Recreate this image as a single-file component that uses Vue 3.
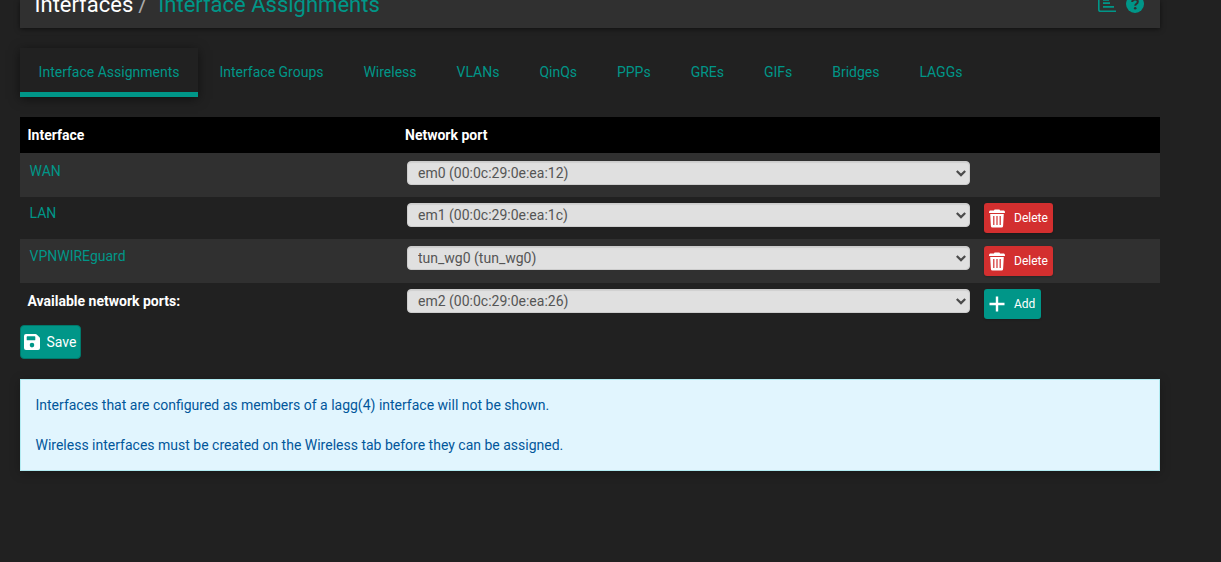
<script setup>
const tabs = ['Interface Assignments', 'Interface Groups', 'Wireless', 'VLANs', 'QinQs', 'PPPs', 'GREs', 'GIFs', 'Bridges', 'LAGGs']
const rows = [
  { name: 'WAN', port: 'em0 (00:0c:29:0e:ea:12)', cls: 'wan' },
  { name: 'LAN', port: 'em1 (00:0c:29:0e:ea:1c)', action: 'Delete', cls: 'lan' },
  { name: 'VPNWIREguard', port: 'tun_wg0 (tun_wg0)', action: 'Delete', cls: 'vpn' },
  { name: 'Available network ports:', port: 'em2 (00:0c:29:0e:ea:26)', action: 'Add', cls: 'available' },
]
</script>

<template>
  <div class="page">
    <header class="header">
      <h1 class="title">
        <span>Interfaces</span><span class="slash">/</span><a class="current">Interface Assignments</a>
      </h1>
      <div class="tools">
        <svg width="18" height="18" viewBox="0 0 18 18" fill="none" stroke="#009688">
          <path d="M.8 0V14.4Q.8 16.2 2.6 16.2H18" stroke-width="1.6" />
          <path d="M5 1.8H13M5 5H11M5 8.2H12M5 11.8H16" stroke-width="1.7" />
        </svg>
        <svg width="18" height="18" viewBox="0 0 18 18">
          <circle cx="9" cy="9" r="9" fill="#009688" />
          <path d="M6.2 7Q6.3 4.4 9 4.4Q11.8 4.4 11.8 6.8Q11.8 8.1 10.4 8.9Q9.2 9.6 9.2 10.7" fill="none" stroke="#303030" stroke-width="2" />
          <circle cx="9.2" cy="13.3" r="1.3" fill="#303030" />
        </svg>
      </div>
    </header>

    <nav class="tabs">
      <a v-for="(t, i) in tabs" :key="t" class="tab" :class="{ active: i === 0 }">{{ t }}</a>
    </nav>

    <div class="table">
      <div class="row head"><div>Interface</div><div>Network port</div><div></div></div>
      <div v-for="r in rows" :key="r.name" class="row" :class="r.cls">
        <div class="name">{{ r.name }}</div>
        <div class="port">
          <div class="field">
            <select><option>{{ r.port }}</option></select>
            <svg class="chevron" width="10" height="7" viewBox="0 0 10 7" fill="none" stroke="#4b4b4b" stroke-width="2.2">
              <path d="M.8 1L5 5.1L9.2 1" />
            </svg>
          </div>
        </div>
        <div class="act">
          <button v-if="r.action" class="btn" :class="r.action.toLowerCase()">
            <svg v-if="r.action === 'Delete'" width="16" height="19" viewBox="0 0 16 19" fill="#fff">
              <path d="M5 1.4Q5 .4 6 .4H10Q11 .4 11 1.4H15Q16 1.6 16 4H0Q0 1.6 1 1.4Z" />
              <path fill-rule="evenodd" d="M1.2 5H14.8L14.1 17Q14 18.6 12.5 18.6H3.5Q2 18.6 1.9 17ZM4.2 7V16H5.4V7ZM7.4 7V16H8.6V7ZM10.6 7V16H11.8V7Z" />
            </svg>
            <svg v-else width="16" height="16" viewBox="0 0 16 16">
              <path d="M8 .5V15.5M.5 8H15.5" stroke="#fff" stroke-width="2.4" />
            </svg>
            <span>{{ r.action }}</span>
          </button>
        </div>
      </div>
    </div>

    <button class="save">
      <svg width="16" height="16" viewBox="0 0 16 16" fill="#fff">
        <path fill-rule="evenodd" d="M2 0H11.5Q12.2 0 12.7 .5L15.5 3.3Q16 3.8 16 4.5V14Q16 16 14 16H2Q0 16 0 14V2Q0 0 2 0ZM3.3 2.3Q2.7 2.3 2.7 2.9V5.7Q2.7 6.3 3.3 6.3H10.7Q11.3 6.3 11.3 5.7V2.9Q11.3 2.3 10.7 2.3ZM8 8.8A2.3 2.3 0 1 0 8 13.4A2.3 2.3 0 1 0 8 8.8Z" />
      </svg>
      <span>Save</span>
    </button>

    <div class="alert">
      <p>Interfaces that are configured as members of a lagg(4) interface will not be shown.</p>
      <p>Wireless interfaces must be created on the Wireless tab before they can be assigned.</p>
    </div>
  </div>
</template>

<style>
body { background: #212121; }
</style>

<style scoped>
.page {
  box-sizing: border-box;
  width: 1221px;
  height: 562px;
  padding: 0 61px 0 20px;
  overflow: hidden;
  background: #212121;
  color: #fff;
  font-family: Roboto, sans-serif;
  font-size: 14px;
  line-height: 20px;
}
.header {
  display: flex;
  justify-content: space-between;
  align-items: flex-start;
  height: 28px;
  padding: 0 16px 0 14.5px;
  background: #303030;
  box-shadow: 0 1px 5px rgba(0, 0, 0, .55);
}
.title {
  display: flex;
  margin: -9px 0 0;
  font-size: 22px;
  font-weight: 400;
  line-height: 28px;
  white-space: nowrap;
}
.slash { margin: 0 11px 0 5px; color: #aaa; }
.current { color: #009688; }
.tools { display: flex; gap: 10px; margin-top: -5px; }
.tabs { display: flex; gap: 2.75px; height: 49px; margin-top: 20px; }
.tab {
  box-sizing: border-box;
  padding: 14px 18.6px 0;
  border-bottom: 5px solid transparent;
  color: #009688;
  white-space: nowrap;
}
.tab.active { border-color: #009688; box-shadow: 0 2px 10px rgba(0, 0, 0, .5); }
.table { margin-top: 20px; }
.row {
  display: grid;
  grid-template-columns: 377.5px 579px 1fr;
  box-sizing: border-box;
  height: 44px;
  padding-left: 7.5px;
}
.head { height: 36px; padding-top: 8px; background: #000; font-weight: 700; }
.wan, .vpn { background: #303030; }
.lan, .available { height: 42px; }
.name { padding: 8px 0 0 2px; color: #009688; }
.lan .name { padding-top: 6px; }
.vpn .name { padding-top: 7px; }
.available .name { padding: 8px 0 0; color: #fff; font-weight: 700; }
.port { padding: 8px 0 0 2px; }
.act { padding-top: 6px; }
.lan .port { padding-top: 6px; }
.vpn .port { padding-top: 7px; }
.vpn .act { padding-top: 7px; }
.available .port { padding-top: 6px; }
.field { position: relative; width: 563px; height: 24px; }
select {
  appearance: none;
  display: block;
  box-sizing: border-box;
  width: 563px;
  height: 24px;
  margin: 0;
  padding: 0 10px;
  border: 1px solid #ccc;
  border-radius: 4px;
  background: #e0e0e0;
  box-shadow: inset 0 1px 1px rgba(0, 0, 0, .075);
  color: #555;
  font: 14px/20px Roboto, sans-serif;
}
.chevron { position: absolute; right: 4px; top: 9px; }
.btn, .save {
  display: flex;
  align-items: center;
  box-sizing: border-box;
  border: 0;
  border-radius: 3px;
  color: #fff;
  font-family: Roboto, sans-serif;
}
.btn { height: 30px; padding: 0 5px; gap: 9px; font-size: 12px; line-height: 18px; box-shadow: 0 1px 2px rgba(0, 0, 0, .2); }
.delete { width: 69px; background: #d32f2f; }
.add { width: 57px; background: #009688; }
.save { width: 61px; height: 34px; padding: 0 3px; gap: 6.4px; border: 1px solid #00796b; border-radius: 4px; background: #009688; font-size: 14px; line-height: 20px; }
.alert {
  box-sizing: border-box;
  height: 92px;
  margin-top: 20px;
  padding: 15px 14.5px;
  border: 1px solid #b2ebf2;
  background: #e1f5fe;
  color: #01579b;
  box-shadow: 0 2px 10px rgba(0, 0, 0, .25);
}
.alert p { margin: 0 0 20px; }
</style>
